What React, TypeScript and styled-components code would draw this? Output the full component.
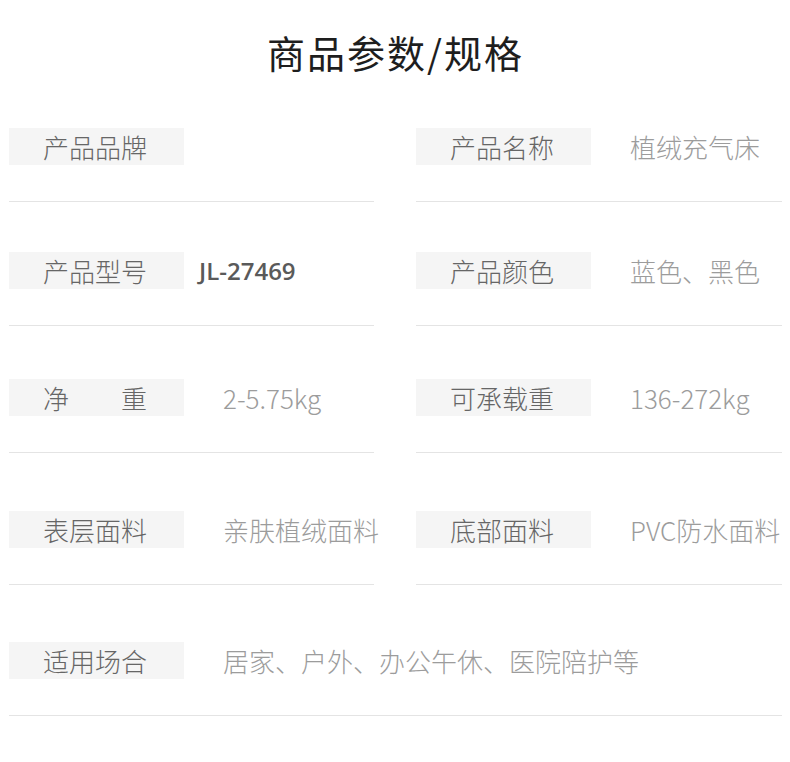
import React from 'react';
import styled, { createGlobalStyle } from 'styled-components';

const GlobalStyle = createGlobalStyle`
  body {
    margin: 0;
    background: #ffffff;
    font-family: "Noto Sans CJK SC", "Noto Sans", sans-serif;
  }
`;

const Page = styled.div`
  width: 790px;
  height: 762px;
  padding: 30px 8px 0 9px;
  box-sizing: border-box;
  overflow: hidden;
`;

const Title = styled.h1`
  margin: 0;
  text-align: center;
  font-size: 38px;
  line-height: 44px;
  font-weight: 400;
  letter-spacing: 2px;
  color: #1e1e1e;
`;

const Row = styled.div<{ $top: number }>`
  display: grid;
  grid-template-columns: 365px 366px;
  column-gap: 42px;
  margin-top: ${(p) => p.$top}px;
`;

const Cell = styled.div<{ $wide?: boolean }>`
  display: flex;
  flex-direction: column;
  grid-column: ${(p) => (p.$wide ? '1 / -1' : 'auto')};
`;

const Head = styled.div`
  display: flex;
  align-items: center;
  height: 37px;
`;

const Label = styled.div`
  flex: none;
  width: 175px;
  height: 37px;
  box-sizing: border-box;
  padding-left: 34px;
  background: #f5f5f5;
  color: #666;
  font-size: 26px;
  font-weight: 300;
  line-height: 37px;
  white-space: pre;
`;

const Value = styled.div<{ $code?: boolean }>`
  margin-left: ${(p) => (p.$code ? 15 : 39)}px;
  white-space: nowrap;
  font-size: ${(p) => (p.$code ? 24 : 26)}px;
  font-weight: ${(p) => (p.$code ? 600 : 300)};
  font-family: ${(p) =>
    p.$code
      ? '"Open Sans", "Noto Sans", sans-serif'
      : '"Noto Sans CJK SC", "Noto Sans", sans-serif'};
  color: ${(p) => (p.$code ? '#5a5a5a' : '#9c9c9c')};
  line-height: 37px;
`;

const Rule = styled.div`
  margin-top: 36px;
  height: 1px;
  background: #e4e4e4;
`;

interface Spec {
  label: string;
  value?: string;
  code?: boolean;
}

const rows: { top: number; cells: Spec[] }[] = [
  {
    top: 54,
    cells: [
      { label: '产品品牌' },
      { label: '产品名称', value: '植绒充气床' },
    ],
  },
  {
    top: 50,
    cells: [
      { label: '产品型号', value: 'JL-27469', code: true },
      { label: '产品颜色', value: '蓝色、黑色' },
    ],
  },
  {
    top: 53,
    cells: [
      { label: '净　　重', value: '2-5.75kg' },
      { label: '可承载重', value: '136-272kg' },
    ],
  },
  {
    top: 58,
    cells: [
      { label: '表层面料', value: '亲肤植绒面料' },
      { label: '底部面料', value: 'PVC防水面料' },
    ],
  },
  {
    top: 57,
    cells: [{ label: '适用场合', value: '居家、户外、办公午休、医院陪护等' }],
  },
];

export default function App() {
  return (
    <Page>
      <GlobalStyle />
      <Title>商品参数/规格</Title>
      {rows.map((row, i) => (
        <Row key={i} $top={row.top}>
          {row.cells.map((cell) => (
            <Cell key={cell.label} $wide={row.cells.length === 1}>
              <Head>
                <Label>{cell.label}</Label>
                {cell.value && <Value $code={cell.code}>{cell.value}</Value>}
              </Head>
              <Rule />
            </Cell>
          ))}
        </Row>
      ))}
    </Page>
  );
}
